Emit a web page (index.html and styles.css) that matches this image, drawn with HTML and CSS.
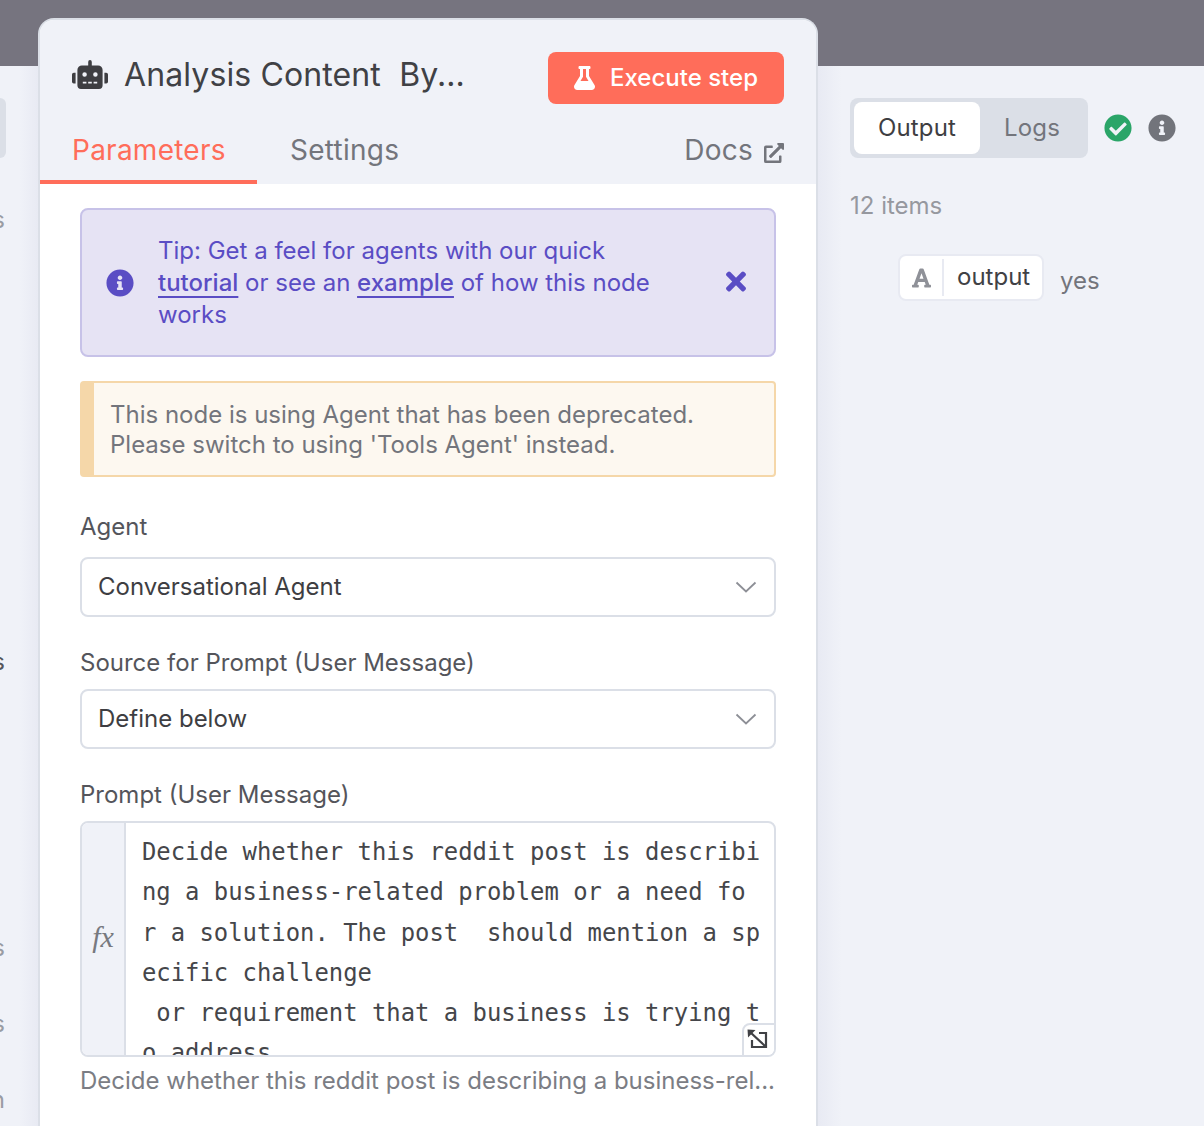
FILE: index.html
```html
<!DOCTYPE html>
<html lang="en">
<head>
<meta charset="utf-8">
<title>Analysis Content</title>
<link rel="stylesheet" href="styles.css">
</head>
<body>
<div class="app">
  <div class="topbar"></div>
  <div class="workspace">
    <aside class="input-pane">
      <div class="input-tab"></div>
      <div class="clip-text light first">items</div>
      <div class="clip-text dark second">fields</div>
      <div class="clip-text light third">values</div>
      <div class="clip-text light fourth">values</div>
      <div class="clip-text light fifth">column</div>
    </aside>
    <section class="panel">
      <header class="panel-head">
        <div class="title-row">
          <svg class="robot" viewBox="0 0 640 512" aria-hidden="true"><path d="M32,224H64V416H32A31.96166,31.96166,0,0,1,0,384V256A31.96166,31.96166,0,0,1,32,224Zm512-48V448a64.06328,64.06328,0,0,1-64,64H160a64.06328,64.06328,0,0,1-64-64V176a79.974,79.974,0,0,1,80-80H288V32a32,32,0,0,1,64,0V96H464A79.974,79.974,0,0,1,544,176ZM264,256a40,40,0,1,0-40,40A39.997,39.997,0,0,0,264,256Zm-8,128H192v32h64Zm96,0H288v32h64ZM456,256a40,40,0,1,0-40,40A39.997,39.997,0,0,0,456,256Zm-8,128H384v32h64ZM640,256V384a31.96166,31.96166,0,0,1-32,32H576V224h32A31.96166,31.96166,0,0,1,640,256Z"/></svg>
          <h1 class="title">Analysis Content&nbsp; By...</h1>
          <button class="execute" type="button">
            <svg class="flask" viewBox="0 0 448 512" aria-hidden="true"><path d="M437.2 403.5L320 215V64h8c13.3 0 24-10.7 24-24V24c0-13.3-10.7-24-24-24H120c-13.3 0-24 10.7-24 24v16c0 13.3 10.7 24 24 24h8v151L10.8 403.5C-18.5 450.6 15.3 512 70.9 512h306.2c55.7 0 89.4-61.5 60.1-108.5zM137.9 320l48.2-77.6c3.7-5.2 5.8-11.6 5.8-18.4V64h64v160c0 6.9 2.2 13.2 5.8 18.4l48.2 77.6h-172z"/></svg>
            Execute step
          </button>
        </div>
        <nav class="tabs">
          <a class="tab active">Parameters</a>
          <a class="tab">Settings</a>
          <a class="tab docs">Docs
            <svg class="ext" viewBox="0 0 512 512" aria-hidden="true"><path d="M432,320H400a16,16,0,0,0-16,16V448H64V128H208a16,16,0,0,0,16-16V80a16,16,0,0,0-16-16H48A48,48,0,0,0,0,112V464a48,48,0,0,0,48,48H400a48,48,0,0,0,48-48V336A16,16,0,0,0,432,320ZM488,0h-128c-21.37,0-32.05,25.91-17,41l35.73,35.73L135,320.37a24,24,0,0,0,0,34L157.67,377a24,24,0,0,0,34,0L435.28,133.32,471,169c15,15,41,4.5,41-17V24A24,24,0,0,0,488,0Z"/></svg>
          </a>
        </nav>
      </header>
      <div class="panel-body">
        <div class="tip">
          <svg class="tip-icon" viewBox="0 0 512 512" aria-hidden="true"><path d="M256 8C119.043 8 8 119.083 8 256c0 136.997 111.043 248 248 248s248-111.003 248-248C504 119.083 392.957 8 256 8zm0 110c23.196 0 42 18.804 42 42s-18.804 42-42 42-42-18.804-42-42 18.804-42 42-42zm56 254c0 6.627-5.373 12-12 12h-88c-6.627 0-12-5.373-12-12v-24c0-6.627 5.373-12 12-12h12v-64h-12c-6.627 0-12-5.373-12-12v-24c0-6.627 5.373-12 12-12h64c6.627 0 12 5.373 12 12v100h12c6.627 0 12 5.373 12 12v24z"/></svg>
          <p class="tip-text">Tip: Get a feel for agents with our quick <a class="tip-link">tutorial</a> or see an <a class="tip-link">example</a> of how this node works</p>
          <svg class="tip-close" viewBox="0 0 352 512" aria-hidden="true"><path d="M242.72 256l100.070-100.070c12.280-12.280 12.280-32.190 0-44.480l-22.240-22.240c-12.280-12.280-32.190-12.280-44.480 0L176 189.280 75.930 89.210c-12.280-12.280-32.190-12.280-44.480 0L9.210 111.450c-12.280 12.280-12.280 32.190 0 44.480L109.280 256 9.210 356.070c-12.280 12.280-12.280 32.190 0 44.480l22.240 22.240c12.280 12.280 32.200 12.280 44.480 0L176 322.720l100.070 100.070c12.280 12.280 32.200 12.280 44.480 0l22.240-22.240c12.280-12.280 12.280-32.190 0-44.480L242.720 256z"/></svg>
        </div>
        <div class="warn">This node is using Agent that has been deprecated.<br>Please switch to using 'Tools Agent' instead.</div>
        <label class="field-label">Agent</label>
        <div class="select">Conversational Agent
          <svg class="chev" viewBox="0 0 22 12" aria-hidden="true"><polyline points="1.500,1.500 11,10.500 20.500,1.500"/></svg>
        </div>
        <label class="field-label">Source for Prompt (User Message)</label>
        <div class="select">Define below
          <svg class="chev" viewBox="0 0 22 12" aria-hidden="true"><polyline points="1.500,1.500 11,10.500 20.500,1.500"/></svg>
        </div>
        <label class="field-label">Prompt (User Message)</label>
        <div class="editor">
          <div class="fx">fx</div>
          <div class="code">Decide whether this reddit post is describi
ng a business-related problem or a need fo
r a solution. The post  should mention a sp
ecific challenge
 or requirement that a business is trying t
o address.</div>
          <button class="expand" type="button" aria-label="Expand">
            <svg viewBox="0 0 30 30" aria-hidden="true"><path class="expand-line" d="M15 8 H22 V22 H8 V15 M6 7 L21 21"/><polygon class="expand-head" points="3.500,4.500 11.500,5 4,12.500"/></svg>
          </button>
        </div>
        <div class="hint">Decide whether this reddit post is describing a business-rel...</div>
      </div>
    </section>
    <aside class="output-pane">
      <div class="output-head">
        <div class="switch">
          <span class="switch-item on">Output</span>
          <span class="switch-item">Logs</span>
        </div>
        <svg class="status ok" viewBox="0 0 512 512" aria-hidden="true"><path d="M504 256c0 136.967-111.033 248-248 248S8 392.967 8 256 119.033 8 256 8s248 111.033 248 248zM227.314 387.314l184-184c6.248-6.248 6.248-16.379 0-22.627l-22.627-22.627c-6.248-6.249-16.379-6.249-22.628 0L216 308.118l-70.059-70.059c-6.248-6.248-16.379-6.248-22.628 0l-22.627 22.627c-6.248 6.248-6.248 16.379 0 22.627l104 104c6.249 6.250 16.379 6.250 22.628.001z"/></svg>
        <svg class="status info" viewBox="0 0 512 512" aria-hidden="true"><path d="M256 8C119.043 8 8 119.083 8 256c0 136.997 111.043 248 248 248s248-111.003 248-248C504 119.083 392.957 8 256 8zm0 110c23.196 0 42 18.804 42 42s-18.804 42-42 42-42-18.804-42-42 18.804-42 42-42zm56 254c0 6.627-5.373 12-12 12h-88c-6.627 0-12-5.373-12-12v-24c0-6.627 5.373-12 12-12h12v-64h-12c-6.627 0-12-5.373-12-12v-24c0-6.627 5.373-12 12-12h64c6.627 0 12 5.373 12 12v100h12c6.627 0 12 5.373 12 12v24z"/></svg>
      </div>
      <div class="count">12 items</div>
      <div class="row">
        <div class="pill">
          <svg class="type" viewBox="0 0 448 512" aria-hidden="true"><path d="M432 416h-23.41L277.880 53.690A32 32 0 0 0 247.580 32h-47.160a32 32 0 0 0-30.300 21.690L39.410 416H16a16 16 0 0 0-16 16v32a16 16 0 0 0 16 16h128a16 16 0 0 0 16-16v-32a16 16 0 0 0-16-16h-19.600l23.300-64h152.600l23.300 64H304a16 16 0 0 0-16 16v32a16 16 0 0 0 16 16h128a16 16 0 0 0 16-16v-32a16 16 0 0 0-16-16zM176.850 272L224 142.510 271.150 272z"/></svg>
          <span class="pill-name">output</span>
        </div>
        <span class="value">yes</span>
      </div>
    </aside>
  </div>
</div>
</body>
</html>
```

FILE: styles.css
```css
* { box-sizing: border-box; }
html, body { margin: 0; height: 100%; }
body { font-family: Inter, "Liberation Sans", sans-serif; background: #f0f2f8; overflow: hidden; }
.app { height: 1126px; overflow: hidden; display: flex; flex-direction: column; }
.topbar { height: 66px; flex: none; background: #76747f; }
.workspace { flex: 1; display: flex; min-height: 0; }

.input-pane { width: 38px; flex: none; overflow: hidden; padding-top: 32px; background: linear-gradient(90deg, #f0f2f8 50%, #e8eaf3 100%); }
.input-tab { width: 6px; height: 60px; background: #dbdfe7; border-radius: 0 8px 8px 0; }
.clip-text { display: flex; justify-content: flex-end; padding-right: 33px; font-size: 24px; line-height: 30px; white-space: nowrap; }
.clip-text.light { color: #9a9ca3; }
.clip-text.dark { color: #55565c; }
.clip-text.first { margin-top: 47px; }
.clip-text.second { margin-top: 412px; }
.clip-text.third { margin-top: 256px; }
.clip-text.fourth { margin-top: 46px; }
.clip-text.fifth { margin-top: 46px; }

.panel { width: 780px; flex: none; margin-top: -48px; position: relative; z-index: 1; background: #fff; border: solid #dbdfe7; border-width: 2px 2px 0; border-radius: 16px 16px 0 0; display: flex; flex-direction: column; overflow: hidden; }
.panel-head { background: #f0f2f8; height: 164px; flex: none; display: flex; flex-direction: column; }
.title-row { height: 108px; display: flex; align-items: flex-start; padding: 32px 32px 0 32px; }
.robot { width: 36px; height: 29px; fill: #3e3e42; margin-top: 8px; flex: none; }
.title { flex: 1; margin: 0 0 0 16px; font-size: 32px; line-height: 46px; font-weight: 400; letter-spacing: .12px; color: #404145; white-space: nowrap; }
.execute { width: 236px; height: 52px; flex: none; display: flex; align-items: center; justify-content: center; gap: 15px; border: 0; border-radius: 8px; background: #ff6d5a; color: #fff; font: 500 24px/1 Inter, sans-serif; }
.flask { width: 21px; height: 24px; fill: #fff; }

.tabs { flex: 1; display: flex; align-items: flex-start; }
.tab { font-size: 28px; line-height: 36px; letter-spacing: .25px; color: #73757c; padding: 4px 32px 0; height: 56px; font-weight: 400; }
.tab.active { color: #ff6d5a; border-bottom: 4px solid #ff6d5a; width: 217px; margin-right: 1px; }
.tab.docs { margin-left: auto; display: flex; align-items: flex-start; gap: 11px; padding-right: 32px; }
.ext { width: 20px; height: 20px; fill: #73757c; margin-top: 11px; }

.panel-body { flex: 1; padding: 24px 40px 0; min-height: 0; }
.tip { height: 149px; display: flex; align-items: center; background: #e6e3f4; border: 2px solid #c7c2e8; border-radius: 8px; color: #5a4dc4; }
.tip-icon { width: 28px; height: 28px; fill: #5a4dc4; margin-left: 24px; flex: none; }
.tip-text { margin: 0 0 0 24px; width: 510px; font-size: 24px; line-height: 32px; }
.tip-link { font-weight: 500; text-decoration: underline; text-underline-offset: 5px; text-decoration-thickness: 2px; text-decoration-skip-ink: none; }
.tip-close { width: 20px; height: 29px; fill: #5a4dc4; margin: -2px 28px 0 auto; flex: none; }

.warn { margin-top: 24px; height: 96px; padding: 17px 16px 0 16px; background: #fdf8f0; border: 2px solid #f5d7a9; border-left-width: 14px; border-radius: 4px; font-size: 24px; line-height: 30px; color: #73757c; white-space: nowrap; }

.field-label { display: block; font-size: 24px; line-height: 32px; color: #54555b; margin: 30px 0 10px; }
.warn + .field-label { margin: 34px 0 14px; }
.select { height: 60px; display: flex; align-items: center; justify-content: space-between; padding: 0 17px 2px 16px; background: #fff; border: 2px solid #dbdfe7; border-radius: 8px; font-size: 24px; color: #3e3e42; }
.chev { width: 22px; height: 12px; margin-top: 2px; fill: none; stroke: #8d8f96; stroke-width: 1.800; }

.editor { position: relative; height: 236px; display: flex; overflow: hidden; border: 2px solid #dbdfe7; border-radius: 8px; background: #fff; }
.fx { width: 44px; flex: none; display: flex; align-items: center; justify-content: center; padding-bottom: 4px; background: #f0f2f8; border-right: 2px solid #dbdfe7; font: italic 30px "Liberation Serif", serif; color: #77797f; }
.code { padding: 9px 0 0 16px; font: 23.880px/40.300px "DejaVu Sans Mono", monospace; color: #45464a; white-space: pre; }
.expand { position: absolute; right: -2px; bottom: -2px; width: 34px; height: 34px; padding: 0; background: #fff; border: 2px solid #dbdfe7; border-radius: 8px 0 0 0; }
.expand svg { display: block; width: 30px; height: 30px; }
.expand-line { fill: none; stroke: #404145; stroke-width: 2.200; }
.expand-head { fill: #404145; }

.hint { margin-top: 8px; font-size: 24px; line-height: 32px; color: #7b7d84; white-space: nowrap; }

.output-pane { flex: 1; padding: 32px 0 0 32px; background: linear-gradient(90deg, #e8eaf3 0, #f0f2f8 24px); }
.output-head { display: flex; align-items: center; }
.switch { width: 238px; height: 60px; padding: 4px; display: flex; background: #dbdfe7; border-radius: 8px; }
.switch-item { display: flex; align-items: center; justify-content: center; padding-bottom: 2px; font-size: 24px; letter-spacing: .15px; color: #73757c; height: 52px; width: 104px; }
.switch-item.on { width: 126px; background: #fff; color: #3e3e42; border-radius: 8px; }
.status { width: 28px; height: 28px; flex: none; }
.status.ok { fill: #2aa568; margin-left: 16px; }
.status.info { fill: #72747b; margin-left: 16px; }
.count { margin-top: 32px; font-size: 24px; line-height: 32px; color: #96989f; }
.row { margin: 32px 0 0 48px; display: flex; align-items: center; }
.pill { width: 146px; height: 47px; display: flex; align-items: center; background: #fff; border: 2px solid #e8eaf2; border-radius: 8px; }
.type { width: 19px; height: 22px; fill: #8f9198; margin-left: 12px; flex: none; }
.pill-name { margin-left: 11px; padding-left: 13px; height: 37px; line-height: 36px; border-left: 2px solid #e8eaf2; font-size: 24px; color: #404145; }
.value { margin-left: 16px; font-size: 24px; color: #73757c; margin-top: 5px; }
```
